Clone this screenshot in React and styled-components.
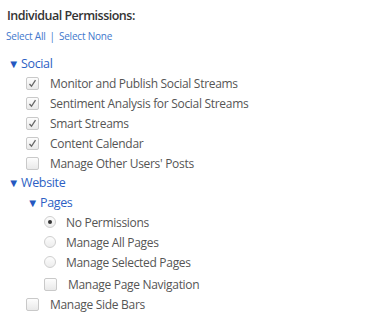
import styled, { createGlobalStyle } from "styled-components";

const GlobalStyle = createGlobalStyle`
  body {
    margin: 0;
    background: #fff;
    font-family: "Open Sans", "Liberation Sans", sans-serif;
    color: #444;
  }
`;

const Panel = styled.div`
  padding: 7px 0 0 7px;
`;

const Title = styled.div`
  font-size: 12.5px;
  font-weight: 600;
  letter-spacing: -0.5px;
  color: #333;
  line-height: 18px;
`;

const Links = styled.div`
  margin: 4px 0 0 -1px;
  font-size: 10px;
  letter-spacing: -0.2px;
  line-height: 14px;
  color: #4277cc;

  span {
    margin: 0 4px;
  }
`;

const Tree = styled.div`
  margin-top: 11px;
`;

const Toggle = styled.div`
  display: flex;
  align-items: center;
  height: ${(p) => p.$h || 20}px;
  padding-left: ${(p) => p.$indent || 0}px;
  font-size: 12.5px;
  letter-spacing: -0.35px;
  color: #2d5fc4;

  i {
    font-style: normal;
    font-size: 11.5px;
    width: 13px;
    margin-left: 1px;
    color: #2458c0;
  }
`;

const Row = styled.div`
  display: flex;
  align-items: center;
  height: 20px;
  margin-top: ${(p) => p.$top || 0}px;
  padding-left: ${(p) => p.$indent || 0}px;
  font-size: 12px;
  letter-spacing: -0.3px;
  color: #555;
`;

const Box = styled.span`
  box-sizing: border-box;
  width: 13px;
  height: 13px;
  border: 1px solid #c9c9c9;
  border-radius: 2px;
  background: linear-gradient(#fdfdfd, #e9e9e9);
  display: flex;
  align-items: center;
  justify-content: center;
  margin-right: ${(p) => p.$gap || 11}px;
  flex-shrink: 0;
`;

const Radio = styled.span`
  box-sizing: border-box;
  width: 12px;
  height: 12px;
  border: 1px solid #cfcfcf;
  border-radius: 50%;
  background: linear-gradient(#fdfdfd, #ececec);
  display: flex;
  align-items: center;
  justify-content: center;
  margin-right: 10px;
  flex-shrink: 0;

  &::after {
    content: "";
    display: ${(p) => (p.$checked ? "block" : "none")};
    width: 4px;
    height: 4px;
    border-radius: 50%;
    background: #333;
  }
`;

const Check = () => (
  <svg width="9" height="9" viewBox="0 0 9 9">
    <path d="M1.5 5 L3.5 7.3 L7.5 1.2" fill="none" stroke="#666" strokeWidth="1.3" />
  </svg>
);

const CheckRow = ({ label, checked, indent, gap, top }) => (
  <Row $indent={indent} $top={top}>
    <Box $gap={gap}>{checked && <Check />}</Box>
    {label}
  </Row>
);

const RadioRow = ({ label, checked }) => (
  <Row $indent={37}>
    <Radio $checked={checked} />
    {label}
  </Row>
);

export default function App() {
  return (
    <>
      <GlobalStyle />
      <Panel>
        <Title>Individual Permissions:</Title>
        <Links>
          Select All<span>|</span>Select None
        </Links>
        <Tree>
          <Toggle $h={19}>
            <i>▼</i>Social
          </Toggle>
          <CheckRow indent={19} checked label="Monitor and Publish Social Streams" />
          <CheckRow indent={19} checked label="Sentiment Analysis for Social Streams" />
          <CheckRow indent={19} checked label="Smart Streams" />
          <CheckRow indent={19} checked label="Content Calendar" />
          <CheckRow indent={19} label="Manage Other Users' Posts" />
          <Toggle $h={19}>
            <i>▼</i>Website
          </Toggle>
          <Toggle $indent={19}>
            <i>▼</i>Pages
          </Toggle>
          <RadioRow checked label="No Permissions" />
          <RadioRow label="Manage All Pages" />
          <RadioRow label="Manage Selected Pages" />
          <CheckRow indent={37} top={2} gap={11} label="Manage Page Navigation" />
          <CheckRow indent={19} label="Manage Side Bars" />
        </Tree>
      </Panel>
    </>
  );
}
